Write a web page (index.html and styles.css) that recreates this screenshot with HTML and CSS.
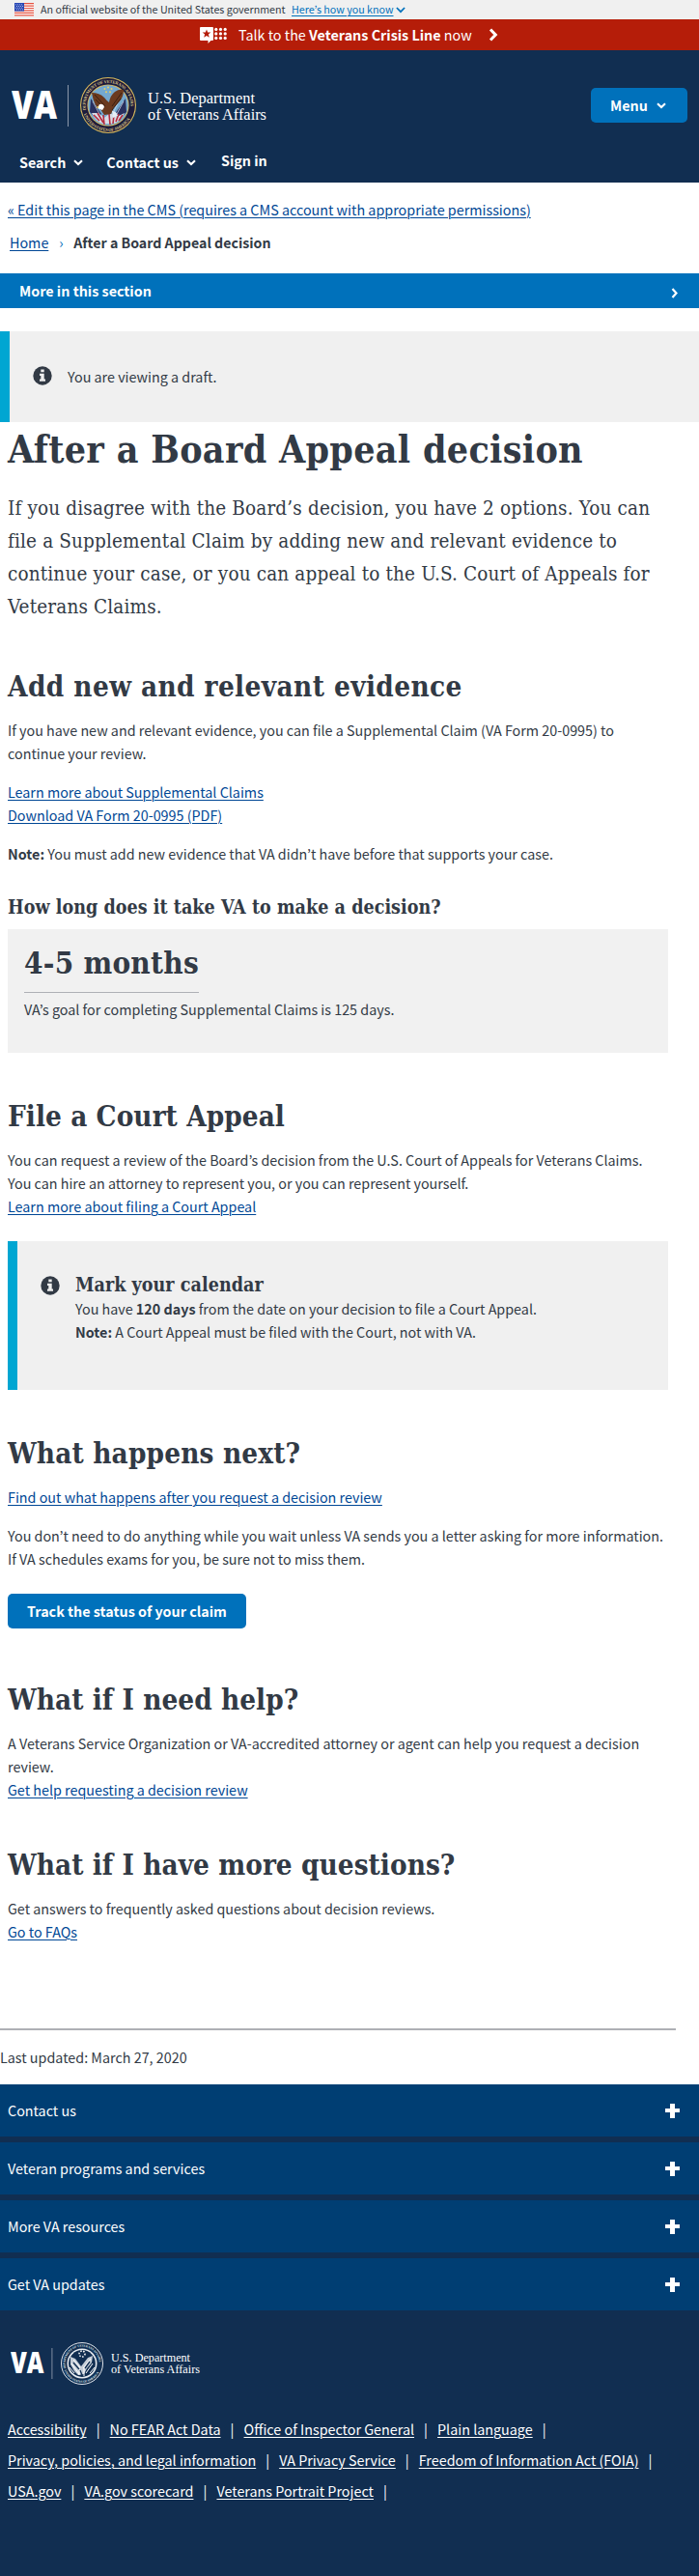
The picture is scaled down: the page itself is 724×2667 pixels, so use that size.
FILE: index.html
```html
<!DOCTYPE html>
<html lang="en">
<head>
<meta charset="utf-8">
<title>After a Board Appeal decision</title>
<link rel="stylesheet" href="styles.css">
</head>
<body>
<div class="gov">
  <svg class="flag" width="20" height="14" viewBox="0 0 20 14"><rect width="20" height="14" fill="#fff"/><path d="M0 .7h20M0 3.1h20M0 5.5h20M0 7.9h20M0 10.3h20M0 12.9h20" stroke="#e4513f" stroke-width="1.2"/><rect width="10" height="8.6" fill="#2a49b5"/><path d="M1 1.8h8M2 3.5h8M1 5.2h8M2 6.9h8" stroke="#c3cdf0" stroke-width=".8" stroke-dasharray="1 1"/></svg>
  <span class="gov-text">An official website of the United States government</span>
  <a class="gov-link" href="#">Here’s how you know</a>
  <svg class="gov-chev" width="10" height="7" viewBox="0 0 10 7"><path d="M.9 1l4.1 4.2L9.100 1" fill="none" stroke="#0071bc" stroke-width="1.7"/></svg>
</div>
<div class="crisis">
  <svg width="28" height="17" viewBox="0 0 28 17" fill="#fff"><path d="M1 0h12a1 1 0 0 1 1 1v12a1 1 0 0 1-1 1h-1.600L8.500 17v-3H1a1 1 0 0 1-1-1V1a1 1 0 0 1 1-1z"/><path d="M7 2.600l1.200 3h3.200L8.900 7.600l.9 3.100L7 8.900l-2.800 1.800.9-3.100-2.500-2h3.200z" fill="#b51d09"/><circle cx="16.800" cy="2.400" r="1.600"/><circle cx="21.500" cy="2.400" r="1.600"/><circle cx="26.200" cy="2.400" r="1.600"/><circle cx="16.800" cy="6.900" r="1.600"/><circle cx="21.500" cy="6.900" r="1.600"/><circle cx="26.200" cy="6.900" r="1.600"/><circle cx="16.800" cy="11.400" r="1.600"/><circle cx="21.500" cy="11.400" r="1.600"/><circle cx="26.200" cy="11.400" r="1.600"/></svg>
  <span class="crisis-text">Talk to the <b>Veterans Crisis Line</b> now</span>
  <svg width="10" height="14" viewBox="0 0 10 14"><path d="M2 1.500L7.300 7 2 12.500" fill="none" stroke="#fff" stroke-width="3"/></svg>
</div>
<header class="header">
  <div class="brand-row">
    <svg class="logo" width="270" height="62" viewBox="0 0 270 62">
      <text x="0" y="45" class="va" font-size="40" textLength="47" lengthAdjust="spacingAndGlyphs">VA</text>
      <path d="M58.500 10v43" stroke="#8b98aa"/>
      <g transform="translate(100 31)">
        <circle r="29" fill="#d9b95c"/><circle r="27.900" fill="#1d1c3c"/>
        <circle r="21.600" fill="#d9b95c"/><circle r="20.700" fill="#74a9cf"/>
        <path id="ring-top" d="M-22.900 5A23.400 23.400 0 1 1 22.900 5" fill="none"/>
        <path id="ring-bottom" d="M-25.200 9A26.700 26.700 0 0 0 25.200 9" fill="none"/>
        <text class="ring"><textPath href="#ring-top" textLength="79">DEPARTMENT OF VETERANS AFFAIRS</textPath></text>
        <text class="ring"><textPath href="#ring-bottom" textLength="60">UNITED STATES OF AMERICA</textPath></text>
        <g fill="#e8cf62"><circle cx="0" cy="-18.500" r="1"/><circle cx="-3.500" cy="-17" r="1"/><circle cx="3.500" cy="-17" r="1"/><circle cx="-2" cy="-13.800" r="1"/><circle cx="2" cy="-13.800" r="1"/></g>
        <path d="M-18-7l-1 14 7 7 5-5zM18-7l1 14-7 7-5-5z" fill="#28305f"/>
        <path d="M-16-4l7 13M-12-6l6 12M16-4L9 9M12-6L6 6" stroke="#dfe5f2" stroke-width=".7"/>
        <path d="M-17 8q4 9 12 11h10q8-2 12-11l-8 4-7-4-6 5-6-5z" fill="#d8dce6"/>
        <path d="M-15 10l6 6M-11 8l6 10M-5 10l1 10M1 9l1 11M6 10l-1 9M11 9L8 17M15 10l-4 6" stroke="#b42b3e" stroke-width="1.600"/>
        <path d="M-17-13q8 0 13 5 3 4 5 5 1-7 6-11 4-3 9-2 0 8-5 13l-5 5-3 7-7 1-4-6-5-4q-3-6-4-13z" fill="#6b3a1e"/>
        <path d="M-14-11L-3 1M-13-6l9 9M14-13L4 1M13-7L4 5" stroke="#3a2013" stroke-width="1"/>
        <path d="M-9-1q4-1 5 3l-2 3-5-2z" fill="#fff"/><path d="M-10 1l-3 1 3 1z" fill="#e0b541"/><path d="M4 6q5 0 6 5l-5 2z" fill="#e6eef5"/>
      </g>
      <text x="141" y="29" class="dept" font-size="16.500" textLength="111" lengthAdjust="spacingAndGlyphs">U.S. Department</text>
      <text x="141" y="45.500" class="dept" font-size="16.500" textLength="123" lengthAdjust="spacingAndGlyphs">of Veterans Affairs</text>
    </svg>
    <button class="menu">Menu<svg width="10" height="7" viewBox="0 0 10 7"><path d="M1 1.200l4 3.800 4-3.800" fill="none" stroke="#fff" stroke-width="2.100"/></svg></button>
  </div>
  <nav class="nav">
    <a href="#">Search<svg width="10" height="7" viewBox="0 0 10 7"><path d="M1 1.200l4 3.800 4-3.800" fill="none" stroke="#fff" stroke-width="2.100"/></svg></a>
    <a href="#">Contact us<svg width="10" height="7" viewBox="0 0 10 7"><path d="M1 1.200l4 3.800 4-3.800" fill="none" stroke="#fff" stroke-width="2.100"/></svg></a>
    <a class="signin" href="#">Sign in</a>
  </nav>
</header>
<div class="cms"><a href="#">« Edit this page in the CMS (requires a CMS account with appropriate permissions)</a></div>
<div class="crumbs"><a href="#">Home</a><span class="sep">›</span><b>After a Board Appeal decision</b></div>
<div class="more"><b>More in this section</b><svg width="8" height="11" viewBox="0 0 8 11"><path d="M1.500 1l4 4.500-4 4.500" fill="none" stroke="#fff" stroke-width="2.200"/></svg></div>
<div class="alert draft">
  <svg class="info" width="20" height="20" viewBox="0 0 20 20"><circle cx="10" cy="10" r="9.700" fill="#323a45"/><path d="M8.300 3.500h3.400v2.800H8.300zM7 7.800h4.700v5.600H13v2.300H7v-2.300h1.300V10H7z" fill="#f0f0f0"/></svg>
  <p>You are viewing a draft.</p>
</div>
<main class="main">
  <h1>After a Board Appeal decision</h1>
  <p class="intro">If you disagree with the Board’s decision, you have 2 options. You can file a Supplemental Claim by adding new and relevant evidence to continue your case, or you can appeal to the U.S. Court of Appeals for Veterans Claims.</p>

  <h2 class="wide">Add new and relevant evidence</h2>
  <p class="first">If you have new and relevant evidence, you can file a Supplemental Claim (VA Form 20-0995) to continue your review.</p>
  <p><a href="#">Learn more about Supplemental Claims</a><br><a href="#">Download VA Form 20-0995 (PDF)</a></p>
  <p><b>Note:</b> You must add new evidence that VA didn’t have before that supports your case.</p>
  <h3>How long does it take VA to make a decision?</h3>
  <div class="card"><div class="figure">4-5 months</div><p>VA’s goal for completing Supplemental Claims is 125 days.</p></div>

  <h2>File a Court Appeal</h2>
  <p class="first">You can request a review of the Board’s decision from the U.S. Court of Appeals for Veterans Claims. You can hire an attorney to represent you, or you can represent yourself.<br><a href="#">Learn more about filing a Court Appeal</a></p>
  <div class="alert calendar">
    <svg class="info" width="20" height="20" viewBox="0 0 20 20"><circle cx="10" cy="10" r="9.700" fill="#323a45"/><path d="M8.300 3.500h3.400v2.800H8.300zM7 7.800h4.700v5.600H13v2.300H7v-2.300h1.300V10H7z" fill="#f0f0f0"/></svg>
    <div><h3>Mark your calendar</h3><p>You have <b>120 days</b> from the date on your decision to file a Court Appeal.<br><b>Note:</b> A Court Appeal must be filed with the Court, not with VA.</p></div>
  </div>

  <h2 class="next">What happens next?</h2>
  <p class="first"><a href="#">Find out what happens after you request a decision review</a></p>
  <p>You don’t need to do anything while you wait unless VA sends you a letter asking for more information. If VA schedules exams for you, be sure not to miss them.</p>
  <a class="track" href="#">Track the status of your claim</a>

  <h2 class="after-button">What if I need help?</h2>
  <p class="first">A Veterans Service Organization or VA-accredited attorney or agent can help you request a decision review.<br><a href="#">Get help requesting a decision review</a></p>

  <h2>What if I have more questions?</h2>
  <p class="first">Get answers to frequently asked questions about decision reviews.<br><a href="#">Go to FAQs</a></p>
</main>
<div class="updated">Last updated: March 27, 2020</div>
<footer class="footer">
  <ul class="accordion">
    <li>Contact us<i class="plus"></i></li>
    <li>Veteran programs and services<i class="plus"></i></li>
    <li>More VA resources<i class="plus"></i></li>
    <li>Get VA updates<i class="plus"></i></li>
  </ul>
  <svg class="foot-logo" width="210" height="46" viewBox="0 0 210 46">
    <text x="0" y="33" class="va" font-size="29.500" textLength="34.500" lengthAdjust="spacingAndGlyphs">VA</text>
    <path d="M42.900 7v32" stroke="#7f8da1"/>
    <g transform="translate(74 23)">
      <circle r="21.500" fill="#112e51" stroke="#dfe4ea"/><circle r="15.500" fill="#e9edf1"/>
      <path id="fring-top" d="M-16.800 5A17.500 17.500 0 1 1 16.800 5" fill="none"/>
      <path id="fring-bottom" d="M-18.500 7A19.800 19.800 0 0 0 18.500 7" fill="none"/>
      <text class="ring small"><textPath href="#fring-top" textLength="58">DEPARTMENT OF VETERANS AFFAIRS</textPath></text>
      <text class="ring small"><textPath href="#fring-bottom" textLength="45">UNITED STATES OF AMERICA</textPath></text>
      <circle r="13.900" fill="#112e51"/>
      <path d="M-12-7l5 2 6 8 7-9 5-2-1 7-5 6-3 6-6 1-4-4-4-7z" fill="#c5ced8"/>
      <path d="M-13 4l5 6M-11 0L-3 11M13 4l-5 6M11 0L4 10M-3 3v9M2 4v9M-9-4l7 8M9-5L1 5" stroke="#fff" stroke-width="1"/>
      <path d="M-9-1l6 7M8-2L3 5M-2 7l2 5" stroke="#112e51" stroke-width="1.300"/>
      <circle cy="-10" r="3" fill="none" stroke="#fff" stroke-width="1.500" stroke-dasharray="1.500 1.500"/>
    </g>
    <text x="104" y="21" class="dept" font-size="12.500" textLength="82" lengthAdjust="spacingAndGlyphs">U.S. Department</text>
    <text x="104" y="33" class="dept" font-size="12.500" textLength="92" lengthAdjust="spacingAndGlyphs">of Veterans Affairs</text>
  </svg>
  <ul class="links">
    <li><a href="#">Accessibility</a></li><li><a href="#">No FEAR Act Data</a></li><li><a href="#">Office of Inspector General</a></li><li><a href="#">Plain language</a></li><li><a href="#">Privacy, policies, and legal information</a></li><li><a href="#">VA Privacy Service</a></li><li><a href="#">Freedom of Information Act (FOIA)</a></li><li><a href="#">USA.gov</a></li><li><a href="#">VA.gov scorecard</a></li><li><a href="#">Veterans Portrait Project</a></li>
  </ul>
</footer>
</body>
</html>
```
FILE: styles.css
```css
* { box-sizing: border-box; }
body {
  margin: 0;
  background: #fff;
  color: #323a45;
  font: 14.34px/24px "Noto Sans CJK KR", "Noto Sans", sans-serif;
}
a { color: #004795; text-decoration: underline; text-decoration-thickness: 1px; text-underline-offset: 2px; }
h1, h2, h3, p, ul { margin: 0; padding: 0; }
ul { list-style: none; }
svg { display: block; flex: none; }
h1, h2, h3, .intro, .figure {
  font-family: "DejaVu Serif Condensed", "DejaVu Serif", serif;
}

.gov { display: flex; align-items: center; height: 20px; padding-left: 15px; background: #f0f0f0; font-size: 10.7px; line-height: 20px; white-space: nowrap; }
.gov-text { width: 254px; margin-left: 7px; }
.gov-link { margin-left: 6px; color: #0071bc; }
.gov-chev { margin-left: 2px; }

.crisis { display: flex; align-items: center; height: 32px; padding-left: 207px; background: #b51d09; color: #fff; }
.crisis-text { margin: 0 17px 0 12px; width: 242px; white-space: nowrap; }

.header { height: 137px; padding: 26px 12px 0; background: #112e51; color: #fff; }
.brand-row { display: flex; align-items: flex-start; justify-content: space-between; height: 76px; }
.va { fill: #fff; font-family: "Open Sans", sans-serif; font-weight: 800; }
.dept { fill: #fff; font-family: "Liberation Serif", serif; }
.ring { fill: #d9c384; font: 700 4.4px "Liberation Serif", serif; }
.ring.small { fill: #dfe4ea; font-size: 3.2px; }
.menu { display: flex; align-items: center; width: 100px; height: 36px; margin-top: 13px; padding: 0 0 0 20px; border: 0; border-radius: 5px; background: #0071bb; color: #fff; font: inherit; font-weight: 700; }
.menu svg { margin-left: 9px; }
.nav { display: flex; align-items: flex-start; padding: 2px 0 0 8px; font-weight: 700; }
.nav a { display: flex; align-items: center; margin-right: 24px; color: #fff; text-decoration: none; white-space: nowrap; }
.nav svg { margin: 1px 0 0 8px; }
.nav .signin { margin: -2px 0 0 2px; }

.cms { padding: 16px 8px 0; }
.crumbs { display: flex; margin-top: 10px; padding: 0 10px; }
.crumbs .sep { width: 26px; text-align: center; color: #0071bb; }
.crumbs b { font-size: 14.2px; }
.more { display: flex; align-items: center; justify-content: space-between; height: 36px; margin-top: 20px; padding: 0 21px 0 20px; background: #0071bb; color: #fff; }
.more svg { margin-top: 4px; }

.alert { display: flex; border-left: 10px solid #00a6d2; background: #f0f0f0; }
.draft { height: 94px; margin-top: 24px; padding: 35px 0 0 24px; }
.draft .info { margin-top: 1px; }
.draft p { margin-left: 16px; }

.main { padding: 8px 32px 0 8px; }
h1 { font-size: 39px; line-height: 40px; letter-spacing: .3px; white-space: nowrap; }
.intro { font-size: 20.5px; line-height: 34px; letter-spacing: .15px; }
h2 { margin-top: 48px; font-size: 29.4px; line-height: 36px; letter-spacing: .05px; }
h2.wide { letter-spacing: .4px; }
h2.next { letter-spacing: .15px; }
h2.after-button { margin-top: 56px; }
h3 { margin-top: 31px; font-size: 19.5px; line-height: 26px; letter-spacing: .05px; }
.main p { margin-top: 16px; }
.main p.intro { margin-top: 24px; }
.main p.first { margin-top: 15px; }
.card { height: 128px; margin-top: 9px; padding: 17px; background: #f1f1f1; }
.figure { width: 181px; padding-bottom: 12px; border-bottom: 1px solid #aeb0b5; font-size: 31.2px; font-weight: 700; line-height: 36px; letter-spacing: .25px; white-space: nowrap; }
.main .card p { margin-top: 5px; }
.calendar { height: 154px; margin-top: 24px; padding: 33px 0 0 24px; }
.calendar .info { margin: 3px 16px 0 0; }
.calendar h3 { margin: 0; }
.main .calendar p { margin-top: -1px; }
.track { display: flex; align-items: center; justify-content: center; width: 247px; height: 36px; margin-top: 24px; border-radius: 5px; background: #0071bb; color: #fff; font-weight: 700; text-decoration: none; }
.updated { width: 700px; height: 58px; margin-top: 88px; padding-top: 16px; border-top: 2px solid #aeb0b5; }

.footer { height: 509px; background: #112e51; color: #fff; }
.accordion { display: flex; flex-direction: column; gap: 6px; }
.accordion li { display: flex; align-items: center; justify-content: space-between; height: 54px; padding: 0 20px 0 8px; background: #003e73; }
.plus { width: 15px; height: 15px; background: linear-gradient(#fff, #fff) center / 15px 4px no-repeat, linear-gradient(#fff, #fff) center / 5px 15px no-repeat; }
.foot-logo { margin: 32px 0 0 11px; }
.links { display: flex; flex-wrap: wrap; width: 690px; margin-top: 29px; padding-left: 8px; line-height: 32px; }
.links li { white-space: nowrap; }
.links li::after { content: "|"; display: inline-block; width: 24px; text-align: center; }
.links a { color: #fff; }
```
